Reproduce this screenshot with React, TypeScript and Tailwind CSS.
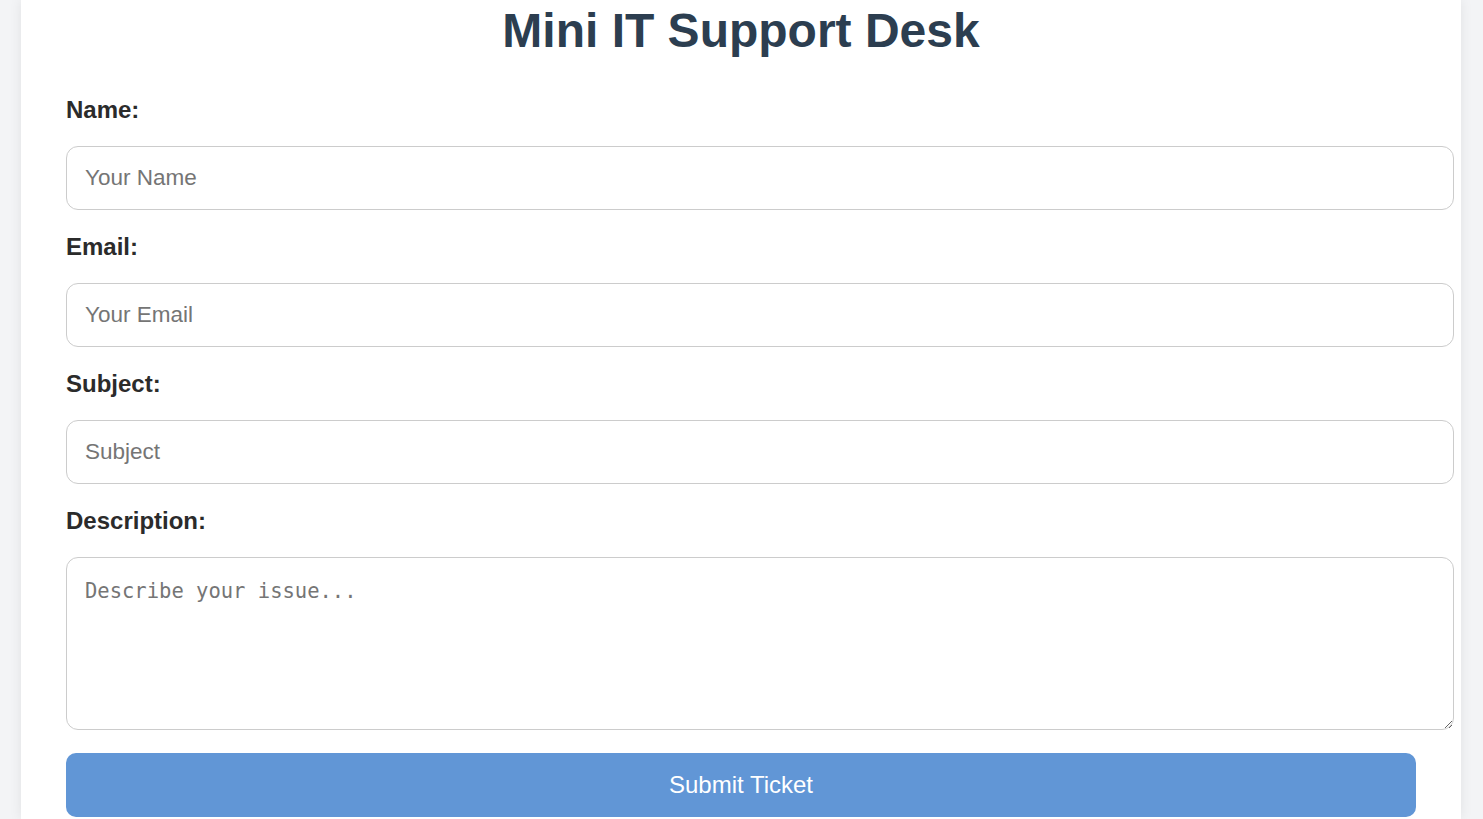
import React from 'react';

const fields = [
  { id: 'name', label: 'Name:', placeholder: 'Your Name', type: 'text' },
  { id: 'email', label: 'Email:', placeholder: 'Your Email', type: 'email' },
  { id: 'subject', label: 'Subject:', placeholder: 'Subject', type: 'text' },
];

const App: React.FC = () => {
  return (
    <div className="min-h-screen bg-[#f3f4f6] font-['Liberation_Sans',Arial,sans-serif]">
      <div className="ml-[21px] w-[1440px] min-h-screen bg-white shadow-[0_0_12px_rgba(0,0,0,0.08)] px-[45px]">
        <h1 className="pt-[3px] text-center text-[48px] leading-[55px] font-bold text-[#2c3e50]">
          Mini IT Support Desk
        </h1>

        <form className="w-[1350px] mt-[38px]" onSubmit={(e) => e.preventDefault()}>
          {fields.map((f) => (
            <div key={f.id} className="mb-[23px]">
              <label htmlFor={f.id} className="block text-[24px] leading-[28px] font-bold text-[#2b2b2b] mb-[22px]">
                {f.label}
              </label>
              <input
                id={f.id}
                type={f.type}
                placeholder={f.placeholder}
                className="box-content block w-full h-[26px] py-[18px] px-[18px] border border-[#cccccc] rounded-[12px] text-[22.5px] text-[#333] placeholder:text-[#757575] outline-none"
              />
            </div>
          ))}

          <div className="mb-[23px]">
            <label htmlFor="description" className="block text-[24px] leading-[28px] font-bold text-[#2b2b2b] mb-[22px]">
              Description:
            </label>
            <textarea
              id="description"
              placeholder="Describe your issue..."
              className="box-content block w-full h-[135px] pt-[21px] pb-[15px] px-[18px] border border-[#cccccc] rounded-[12px] font-['DejaVu_Sans_Mono',monospace] text-[20.5px] leading-[24px] text-[#333] placeholder:text-[#757575] outline-none resize-y"
            />
          </div>

          <button
            type="submit"
            className="block w-full h-[64px] rounded-[10px] bg-[#6196d6] text-white text-[24px]"
          >
            Submit Ticket
          </button>
        </form>
      </div>
    </div>
  );
};

export default App;
